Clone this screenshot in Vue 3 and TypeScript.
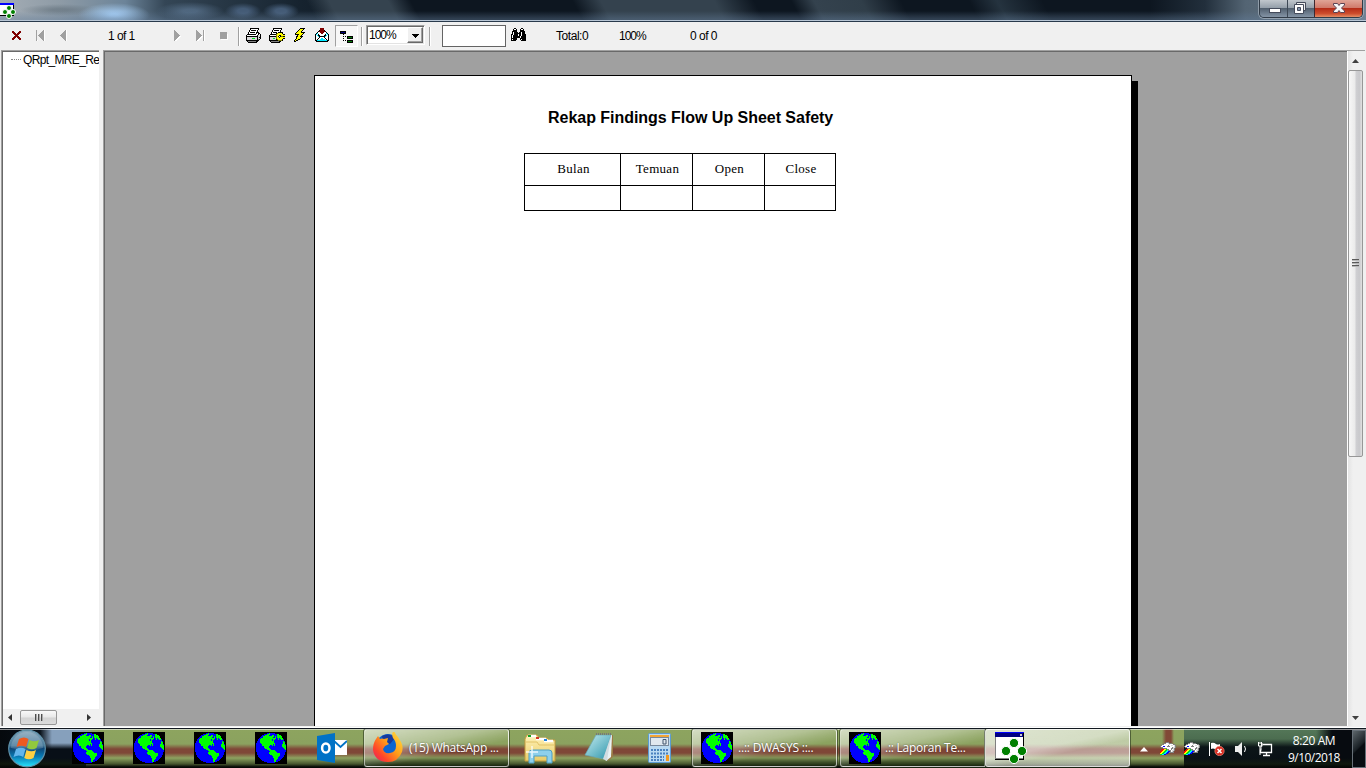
<script setup lang="ts">
interface Run { x: number; y: number; w: number; c: string }

const palette: Record<string, string> = {
  k: '#000', w: '#fff', g: '#a0a0a0', d: '#808080', l: '#d8d8d8', G: '#00e020', y: '#ffff00',
  o: '#808000', r: '#800000', c: '#00e8ff', b: '#000080', e: '#008000', R: '#ff0000', B: '#0000ff',
}

function sprite(rows: string[]): Run[] {
  const out: Run[] = []
  rows.forEach((row, y) => {
    let x = 0
    while (x < row.length) {
      const ch = row[x]
      let end = x + 1
      while (end < row.length && row[end] === ch) end++
      if (palette[ch]) out.push({ x, y, w: end - x, c: palette[ch] })
      x = end
    }
  })
  return out
}

const icons: Record<string, Run[]> = {
  close: sprite([
    'rr.....rr', 'rrr...rrr', '.rrr.rrr.', '..rrrrr..', '...rrr...', '..rrrrr..', '.rrr.rrr.', 'rrr...rrr', 'rr.....rr',
  ]),
  first: sprite([
    'g......gw', 'g.....ggw', 'g....gggw', 'g...ggggw', 'g..gggggw', 'g.ggggggw', 'g..gggggw', 'g...ggggw', 'g....gggw', 'g.....ggw', 'gw.....gw',
  ]),
  prev: sprite([
    '.....gw', '....ggw', '...gggw', '..ggggw', '.gggggw', 'ggggggw', '.gggggw', '..ggggw', '...gggw', '....ggw', '.....gw',
  ]),
  next: sprite([
    'g......', 'gg.....', 'ggg....', 'gggg...', 'ggggg..', 'gggggg.', 'gggggww', 'ggggww.', 'gggww..', 'ggww...', 'gww....',
  ]),
  last: sprite([
    'g......gw', 'gg.....gw', 'ggg....gw', 'gggg...gw', 'ggggg..gw', 'gggggg.gw', 'gggggwwgw', 'ggggww.gw', 'gggww..gw', 'ggww...gw', 'gww....gw',
  ]),
  stop: sprite(['ggggggg', 'ggggggg', 'gggggggw', 'gggggggw', 'gggggggw', 'gggggggw', 'gggggggw', '.wwwwwww']),
  print: sprite([
    '....kkkkkkkkk..',
    '....kwwwwwwwk..',
    '...kwkkkkkwk...',
    '...kwwwwwwwk...',
    '..kwkkkkkwkkk..',
    '..kwwwwwwwkwkk.',
    '.kkkkkkkkkwwkwk',
    'kwwwwwwwwwwkllk',
    'kkkkkkkkkkkkllk',
    'kllllllllllklkk',
    'klllllGGGllkllk',
    'kllllllllllkdk.',
    'kkkkkkkkkkkkk..',
    '.kddddddddkk...',
    '..kkkkkkkkk....',
  ]),
  setup: sprite([
    '....kkkkkkkkk...',
    '....kwwwwwwwk...',
    '...kwkkkkkwk....',
    '...kwwwwwwwk....',
    '..kwkkkkwkkkkk..',
    '..kwwwwkoyyyyk..',
    '.kkkkkkoyyyyyykk',
    'kwwwwwwoyykkyyyy',
    'kkkkkkkoykwkookk',
    'klllllloyykyyyyy',
    'klllGGloyyyyyykk',
    'kllllllkoyyyyk..',
    'kkkkkkkkkooook..',
    '.kddddddddkk....',
    '..kkkkkkkkk.....',
  ]),
  bolt: sprite([
    '......kkkkk.',
    '.....kyyyk..',
    '....kyyyk...',
    '...kyyyk....',
    '..kyyyykkkk.',
    '.kyyyyyyyk..',
    '.kkkkyyyk...',
    '...kyyyk....',
    '..kkyykkk...',
    '..kyyyyk....',
    '..kyyyk.....',
    '.kyykk......',
    'kykk........',
    'kk..........',
  ]),
  mail: sprite([
    '.....rrrr.....',
    '.....rrrr.....',
    '....krrrrk....',
    '...krrrrrrk...',
    '..kwwrrrrwwk..',
    '.kcwwwrrwwwck.',
    'kcwkwwwwwwkwck',
    'kwckkwwwwkkcwk',
    'kwwckkkkkkcwwk',
    'kwwwkwwwwkwwwk',
    'kwwkwwccwwkwwk',
    'kwkwwcccccwkwk',
    'kkcccccccccckk',
    '.kkkkkkkkkkkk.',
  ]),
  tree: sprite([
    'kkkkkk.......', 'kbbbbk.......', 'kkkkkk.......', '...k.........', '.............', '...k.k.kkkkkk', '.......keeeek', '...k...kkkkkk',
    '.............', '...k.k.kkkkkk', '.......keeeek', '.......kkkkkk',
  ]),
  find: sprite([
    '...kk.....kk...',
    '..kwwk...kwwk..',
    '..kkkk...kkkk..',
    '.kkkkk...kkkkk.',
    '.kwkkkk.kkwkkk.',
    '.kwkkkkkkkwkkk.',
    'kkwkkkkwkkwkkkk',
    'kwkkkkkwkkwkkkk',
    'kwkkkkkkkwkkkkk',
    'kwkkkkkkkwkkkkk',
    'kkkkkk...kkkkkk',
    'kwkkkk...kwkkkk',
    'kkkkk.....kkkkk',
  ]),
  tray: sprite([
    '......ddd.......',
    '....ddwwlddd....',
    '..ddwwwwwlwwwdd.',
    '.dwwwwwwdwwllwld',
    'dwwBBwwdddwwwwld',
    '.ddwwwwwwwwwdlld',
    '...ddddwwwwddld.',
    '..RRyyGddwwdwld.',
    '.RRyyGGcdddwlld.',
    'RRyyGGccBBdwld..',
    'RyyGGccBBddddd..',
    'yyGGccBB........',
    'GGccBB..........',
  ]),
}

interface Tool { id: string; cls: string; w: number; h: number }
const nav: Tool[] = [
  { id: 'close', cls: 't-close', w: 9, h: 9 },
  { id: 'first', cls: 't-first', w: 9, h: 11 },
  { id: 'prev', cls: 't-prev', w: 7, h: 11 },
]
const nav2: Tool[] = [
  { id: 'next', cls: 't-next', w: 7, h: 11 },
  { id: 'last', cls: 't-last', w: 9, h: 11 },
  { id: 'stop', cls: 't-stop', w: 8, h: 8 },
]
const actions: Tool[] = [
  { id: 'print', cls: 't-print', w: 15, h: 15 },
  { id: 'setup', cls: 't-setup', w: 16, h: 15 },
  { id: 'bolt', cls: 't-bolt', w: 12, h: 14 },
  { id: 'mail', cls: 't-mail', w: 14, h: 14 },
]
const headings = ['Bulan', 'Temuan', 'Open', 'Close']
</script>

<template>
  <div class="screen">
    <svg class="defs" width="0" height="0">
      <defs>
        <symbol id="globe" viewBox="0 0 32 32">
          <g shape-rendering="crispEdges">
            <rect width="32" height="32" fill="#000" />
            <circle cx="16" cy="16" r="15.2" fill="#00f" />
            <path fill="#0f0" d="M8 4H10V3H12V2H14V1H15V3H14V4H17V3H19V5H18V6H20V4H21V7H20V8H19V11H20V14H19V12H18V14H17V13H15V14H14V16H15V17H16V19H14V18H12V17H10V16H9V14H7V12H6V11H5V7H6V6H8Z" />
            <path fill="#0f0" d="M22 2H24V3H26V4H27V6H28V8H26V7H25V6H24V8H23V6H22ZM28 9H29V10H30V13H31V18H30V17H29V16H28V15H27V12H28ZM15 19H16V18H20V19H21V20H22V21H25V24H24V25H23V27H22V28H21V30H19V26H18V24H17V23H15V22H14V20H15Z" />
            <path fill="#00f" d="M16 1H18V3H16ZM17 7H18V9H17Z" />
          </g>
        </symbol>
        <linearGradient id="orb" x1="0" y1="0" x2="0" y2="1">
          <stop offset="0" stop-color="#8aa9bc" /><stop offset=".42" stop-color="#47799a" />
          <stop offset=".5" stop-color="#0e4777" /><stop offset=".72" stop-color="#087bb5" /><stop offset="1" stop-color="#29e5fc" />
        </linearGradient>
        <linearGradient id="fox" x1="1" y1="0" x2="0" y2="1">
          <stop offset="0" stop-color="#ffe84a" /><stop offset=".45" stop-color="#ff9f19" /><stop offset=".75" stop-color="#ff452a" /><stop offset="1" stop-color="#e6166f" />
        </linearGradient>
        <linearGradient id="folder" x1="0" y1="0" x2="0" y2="1">
          <stop offset="0" stop-color="#fff2b8" /><stop offset="1" stop-color="#e9cc68" />
        </linearGradient>
        <linearGradient id="pad" x1="0" y1="0" x2="1" y2="1">
          <stop offset="0" stop-color="#c6edf0" /><stop offset="1" stop-color="#2c94ab" />
        </linearGradient>
      </defs>
    </svg>

    <header class="titlebar">
      <svg class="app-icon" width="16" height="19" viewBox="0 0 16 19">
        <path fill="#000" d="M0 3h14v13H0z" /><path fill="#fff" d="M0 4h13v11H0z" />
        <path fill="#00f" d="M0 3h14v2H0z" />
        <g fill="#008000" stroke="#fff"><circle cx="9" cy="8" r="2.500" /><circle cx="5" cy="12" r="2.500" /><circle cx="13" cy="12" r="2.500" /><circle cx="9" cy="16" r="2.500" /></g>
      </svg>
      <div class="caption-buttons">
        <span class="cap min">
          <svg width="28" height="17"><rect x="9.5" y="8.5" width="11" height="4" fill="#fff" stroke="#444b5b" /></svg>
        </span>
        <span class="cap max">
          <svg width="26" height="17"><path d="M8.500 2.500h9v8h-9z" fill="#eee" stroke="#444b5b" /><path d="M6.500 4.500h9v9h-9z" fill="#fff" stroke="#444b5b" /><path d="M9.500 7.500h3v3h-3z" fill="#8494ad" stroke="#444b5b" /></svg>
        </span>
        <span class="cap shut">
          <svg width="46" height="17"><path d="M18.500 3.500h4l1.500 2 1.500-2h4v1.500L26.500 8l3 3v1.500h-4l-1.500-2-1.500 2h-4V11l3-3-3-3z" fill="#f7f7f7" stroke="#5b4353" /></svg>
        </span>
      </div>
    </header>

    <div class="toolbar">
      <svg v-for="t in nav" :key="t.id" :class="t.cls" :width="t.w" :height="t.h" shape-rendering="crispEdges">
        <rect v-for="(p, i) in icons[t.id]" :key="i" :x="p.x" :y="p.y" :width="p.w" height="1" :fill="p.c" />
      </svg>
      <span class="label pages">1 of 1</span>
      <svg v-for="t in nav2" :key="t.id" :class="t.cls" :width="t.w" :height="t.h" shape-rendering="crispEdges">
        <rect v-for="(p, i) in icons[t.id]" :key="i" :x="p.x" :y="p.y" :width="p.w" height="1" :fill="p.c" />
      </svg>
      <i class="sep s1"></i>
      <svg v-for="t in actions" :key="t.id" :class="t.cls" :width="t.w" :height="t.h" shape-rendering="crispEdges">
        <rect v-for="(p, i) in icons[t.id]" :key="i" :x="p.x" :y="p.y" :width="p.w" height="1" :fill="p.c" />
      </svg>
      <span class="tree-toggle">
        <svg width="13" height="12" shape-rendering="crispEdges">
          <rect v-for="(p, i) in icons.tree" :key="i" :x="p.x" :y="p.y" :width="p.w" height="1" :fill="p.c" />
        </svg>
      </span>
      <i class="sep s2"></i>
      <div class="combo">
        <span class="label">100%</span>
        <span class="drop"><svg width="7" height="4" shape-rendering="crispEdges"><path d="M0 0h7v1H6v1H5v1H4v1H3V3H2V2H1V1H0z" /></svg></span>
      </div>
      <i class="sep s3"></i>
      <div class="search"></div>
      <svg class="t-find" width="15" height="13" shape-rendering="crispEdges">
        <rect v-for="(p, i) in icons.find" :key="i" :x="p.x" :y="p.y" :width="p.w" height="1" :fill="p.c" />
      </svg>
      <span class="label total">Total:0</span>
      <span class="label percent">100%</span>
      <span class="label found">0 of 0</span>
    </div>

    <main class="work">
      <aside class="tree">
        <div class="node"><i class="dots"></i><span class="label">QRpt_MRE_Re</span></div>
        <div class="hscroll">
          <svg width="4" height="7"><path d="M4 0v7L0 3.500z" fill="#333" /></svg>
          <span class="hthumb"><i></i><i></i><i></i></span>
          <svg class="to-right" width="4" height="7"><path d="M0 0v7l4-3.500z" fill="#333" /></svg>
        </div>
      </aside>
      <section class="viewer">
        <div class="canvas">
          <article class="page">
            <h1>Rekap Findings Flow Up Sheet Safety</h1>
            <table>
              <tbody>
                <tr class="head"><td v-for="h in headings" :key="h"><span>{{ h }}</span></td></tr>
                <tr class="empty"><td v-for="h in headings" :key="h"></td></tr>
              </tbody>
            </table>
          </article>
        </div>
        <div class="vscroll">
          <svg class="arrow-up" width="7" height="4"><path d="M0 4h7L3.500 0z" fill="#404040" /></svg>
          <span class="vthumb"><i></i><i></i><i></i></span>
          <svg class="arrow-down" width="7" height="4"><path d="M0 0h7L3.500 4z" fill="#404040" /></svg>
        </div>
      </section>
    </main>

    <footer class="taskbar">
      <svg class="start" width="40" height="40" viewBox="0 0 40 40">
        <circle cx="20" cy="19.500" r="18.300" fill="url(#orb)" stroke="#5f91a9" stroke-width="1.200" />
        <path d="M4 19a16 16 0 0 1 32 0q-16 5-32 0z" fill="#fff" opacity=".15" />
        <path d="M12 10q5-3 9.500 0l-2.500 8q-4-2.500-9.500 0z" fill="#ee5a20" />
        <path d="M22.500 11q5 2.500 9.500 0l-2.500 8q-4.500 2.500-9.500 0z" fill="#91c83e" />
        <path d="M9 20q5-2.500 9.500 0l-2.300 8q-4-3-9.700 0z" fill="#62b5ec" />
        <path d="M19.500 21q5 2.500 9.500 0l-2.500 8q-4.500 2.500-9.300 0z" fill="#ffd043" />
      </svg>
      <svg v-for="n in 4" :key="n" class="globe pin" width="32" height="32"><use href="#globe" /></svg>
      <svg class="outlook" width="30" height="30" viewBox="0 0 30 30">
        <path d="M15 7h15v15H15z" fill="#fff" /><path d="M17 8l6.500 6L30 8" fill="none" stroke="#0072c6" stroke-width="1.800" />
        <path d="M0 3L18 0v30L0 27z" fill="#0072c6" /><ellipse cx="8.800" cy="15" rx="3.700" ry="4.600" fill="none" stroke="#fff" stroke-width="2.500" />
      </svg>
      <div class="task firefox">
        <svg width="30" height="31" viewBox="0 0 30 31">
          <circle cx="15" cy="14" r="12" fill="#0b65d1" /><path d="M9 4q7-4 13 2l-5 6-7-2z" fill="#173b9d" />
          <path d="M3 7l2-3 2 3q2-1 4 0l4-1-1 4 2 2-4 2-2 3q1 5 7 4 6-1 6-7 0-5-3-8-2-4 1-8 1 4 4 7l1 2q5 6 3 13-4 10-14 10Q2 30 0 18 0 11 3 7z" fill="url(#fox)" />
        </svg>
        <span class="cap-text t1">(15) WhatsApp ...</span>
      </div>
      <svg class="explorer" width="33" height="30" viewBox="0 0 33 30">
        <path d="M3 1h10l2 3h8l2 2h6v21H1V5z" fill="url(#folder)" stroke="#c49b3c" />
        <path d="M4 2h8M12 5h10M20 7h9" stroke="#fff" stroke-width="2.500" /><path d="M4 2h3" stroke="#15a525" stroke-width="2" /><path d="M12 4h3" stroke="#d43924" stroke-width="2" /><path d="M20 6h3" stroke="#2284df" stroke-width="2" />
        <path d="M2 8h11l2 3h16" stroke="#e1c367" fill="none" />
        <path d="M5 29V19q0-3 3-3h17q3 0 3 3v10h-5v-7H10v7z" fill="#8ed0ec" stroke="#4f9fc3" />
        <path d="M8 12v12M2 18h12" stroke="#fff" stroke-width="1.500" opacity=".8" />
      </svg>
      <svg class="notepad" width="31" height="30" viewBox="0 0 31 30">
        <path d="M12 2h17v22l-5 4z" fill="#9b7b45" /><path d="M12 2h16l-1 22-5 4z" fill="#eaf2f5" />
        <path d="M12 2h15L20 26 1 22z" fill="url(#pad)" stroke="#69a9b5" stroke-width=".7" /><path d="M27 3l-4 25-4-2z" fill="#d2dce1" /><path d="M12 1h16" stroke="#777" stroke-width="2" stroke-dasharray="1 1" />
      </svg>
      <svg class="calculator" width="23" height="30" viewBox="0 0 23 30">
        <rect x=".5" y=".5" width="22" height="29" rx="1" fill="#b9daf2" stroke="#5b9bd1" /><rect x="2" y="2" width="19" height="2.500" fill="#f3a536" />
        <rect x="2.500" y="4.500" width="18" height="8" fill="#e0e8ee" stroke="#78899c" /><path d="M15 6.500h3v4.500h-3z" fill="none" stroke="#42576f" />
        <path d="M3 17h17M3 20.500h17M3 24h13M3 27h13" stroke="#4b82c0" stroke-width="2" stroke-dasharray="2 1" /><rect x="18" y="22" width="3" height="6" fill="#f39a21" />
      </svg>
      <div class="task dwasys"><svg class="globe" width="32" height="32"><use href="#globe" /></svg><span class="cap-text t2">..:: DWASYS ::..</span></div>
      <div class="task laporan"><svg class="globe" width="32" height="32"><use href="#globe" /></svg><span class="cap-text t3">.:: Laporan Te...</span></div>
      <div class="task active">
        <svg width="32" height="32" viewBox="0 0 32 32">
          <path d="M0 0h29v28H0z" fill="#000" /><path d="M0 0h28v27H0z" fill="#808080" /><path d="M1 4h27v22H1z" fill="#fff" /><path d="M0 0h29v1H0z" fill="#00f" /><path d="M0 1h28v4H0z" fill="#000080" /><path d="M25 2h2v2h-2z" fill="#ccc" />
          <g fill="#008000" stroke="#fff"><circle cx="19" cy="11" r="4.600" /><circle cx="11" cy="19" r="4.600" /><circle cx="27" cy="19" r="4.600" /><circle cx="19" cy="27" r="4.600" /></g>
        </svg>
      </div>
      <svg class="chevron" width="8" height="5"><path d="M0 4.500h8L4 0z" fill="#fff" /></svg>
      <svg v-for="n in 2" :key="'p' + n" class="tray-printer" width="17" height="14" shape-rendering="crispEdges">
        <rect v-for="(p, i) in icons.tray" :key="i" :x="p.x" :y="p.y" :width="p.w" height="1" :fill="p.c" />
      </svg>
      <svg class="flag" width="16" height="14" viewBox="0 0 16 14">
        <path d="M.5 0v14" stroke="#fff" /><path d="M2 1q3-1 5 1 2 1 4 0v6q-3 1-5-1-2-1-4 0z" fill="#fff" />
        <circle cx="10.500" cy="9" r="4.700" fill="#d92c21" stroke="#f29787" stroke-width=".6" /><path d="M8.500 7l4 4m0-4l-4 4" stroke="#fff" stroke-width="1.500" />
      </svg>
      <svg class="speaker" width="12" height="14" viewBox="0 0 12 14"><path d="M0 4h3l4-4v14l-4-4H0z" fill="#eee" /><path d="M9.500 4q2 3 0 6" fill="none" stroke="#fff" /></svg>
      <svg class="network" width="16" height="15" viewBox="0 0 16 15">
        <path d="M5.500 2.500h9v8h-11v-3M6 13.500h7M9.500 11v2" fill="none" stroke="#fff" stroke-width="1.300" /><path d="M1 1h4v3L4 5.500v3M1.500 0v4h3V0M3 4v9" fill="none" stroke="#fff" />
      </svg>
      <div class="clock"><span>8:20 AM</span><span class="date">9/10/2018</span></div>
      <div class="peek"></div>
    </footer>
  </div>
</template>

<style>
html, body { margin: 0; overflow: hidden; background: #f0f0f0; }
</style>

<style scoped>
* { box-sizing: border-box; }
svg { display: block; flex: none; }
.defs { position: absolute; }
.screen { width: 1366px; height: 768px; display: flex; flex-direction: column; overflow: hidden; font-family: "Liberation Sans", sans-serif; font-size: 11px; color: #000; }

.titlebar {
  height: 22px; flex: none; display: flex; justify-content: space-between; align-items: flex-start; padding-right: 3px;
  border-bottom: 1px solid #293a4c; box-shadow: inset 0 -1px #b8c6d5;
  background:
    linear-gradient(180deg, transparent 11px, #657f9c66 19px),
    radial-gradient(ellipse 36px 12px at 114px 15px, #a6cef5 10%, transparent 100%),
    radial-gradient(ellipse 34px 9px at 190px 11px, #57708acc 20%, transparent 100%),
    radial-gradient(ellipse 18px 8px at 243px 11px, #445b76 30%, transparent 100%),
    radial-gradient(ellipse 18px 8px at 281px 11px, #445b76 30%, transparent 100%),
    radial-gradient(ellipse 40px 6px at 60px 10px, #62707b99 20%, transparent 100%),
    linear-gradient(62deg, transparent 280px, #35434f 300px, #35434f 352px, transparent 372px, transparent 515px, #34424e 540px, #34424e 640px, transparent 675px, transparent 708px, #34424e 728px, #303e49 770px, transparent 805px, transparent 865px, #25333f 890px, transparent 930px),
    linear-gradient(90deg, #a4adb5 0, #8e9ba6 60px, #6c8499 125px, #344656 165px, #16232f 300px, #0d1620 400px, #0d1620 1150px, #222f3c 1205px, #536473 1245px, #748392 1366px);
}
.caption-buttons { display: flex; height: 18px; border: 1px solid #303b47; border-top: 0; border-radius: 0 0 5px 5px; overflow: hidden; box-shadow: 0 0 0 1px #b6c0ca99; }
.cap { display: block; height: 17px; }
.min { width: 28px; border-right: 1px solid #3d4855; }
.max { width: 27px; border-right: 1px solid #3d2830; }
.shut { width: 47px; }
.min, .max { background: linear-gradient(#c1c7cd, #929da8 48%, #52606f 50%, #8494a6); }
.shut { background: linear-gradient(#e0a497, #cf7768 48%, #b52c18 50%, #cd4d2d 80%, #e48d65); }

.toolbar { height: 28px; flex: none; display: flex; align-items: flex-start; background: #f0f0f0; }
.label { white-space: nowrap; font-size: 12px; line-height: 14px; }
.t-close { margin: 9px 0 0 12px; }
.t-first { margin: 8px 0 0 15px; }
.t-prev { margin: 8px 0 0 15px; }
.pages { width: 66px; margin: 7px 0 0 41px; letter-spacing: -.55px; }
.t-next { margin-top: 8px; }
.t-last { margin: 8px 0 0 15px; }
.t-stop { margin: 10px 0 0 15px; }
.sep { width: 2px; height: 19px; margin-top: 5px; background: linear-gradient(90deg, #a0a0a0 50%, #fff 50%); flex: none; }
.s1 { margin-left: 10px; }
.t-print { margin: 6px 0 0 6px; }
.t-setup { margin: 6px 0 0 8px; }
.t-bolt { margin: 6px 0 0 9px; }
.t-mail { margin: 6px 0 0 9px; }
.tree-toggle { width: 23px; height: 22px; margin: 3px 0 0 6px; padding: 5px 0 0 4px; border: 1px solid; border-color: #a0a0a0 #fff #fff #a0a0a0; background: #f7f7f7; flex: none; }
.s2 { margin-left: 3px; }
.combo { width: 59px; height: 20px; margin: 3px 0 0 3px; flex: none; display: flex; justify-content: space-between; background: #fff; border: 1px solid; border-color: #a0a0a0 #fff #fff #a0a0a0; box-shadow: inset 1px 1px #696969, inset -1px -1px #e3e3e3; padding: 1px; }
.combo .label { margin: 1px 0 0 1px; letter-spacing: -1px; }
.drop { width: 16px; height: 16px; background: #f0f0f0; border: 1px solid; border-color: #fff #696969 #696969 #fff; box-shadow: inset -1px -1px #a0a0a0; padding: 6px 0 0 4px; }
.s3 { margin-left: 4px; }
.search { width: 64px; height: 22px; margin: 3px 0 0 11px; background: #fff; border: 1px solid #646464; flex: none; }
.t-find { margin: 6px 0 0 5px; }
.total { width: 63px; margin: 7px 0 0 30px; letter-spacing: -.45px; }
.percent { width: 71px; margin-top: 7px; letter-spacing: -1px; }
.found { margin-top: 7px; letter-spacing: -.5px; }

.work { height: 678px; flex: none; display: flex; background: #f0f0f0; border-bottom: 1px solid #fff; }
.tree { width: 98px; height: 676px; margin-left: 1px; border: 1px solid #a0a0a0; border-width: 1px 0 0 1px; box-shadow: inset 1px 1px #696969; background: #fff; display: flex; flex-direction: column; justify-content: space-between; overflow: hidden; }
.node { display: flex; align-items: center; margin: 1px 0 0 9px; height: 15px; }
.dots { width: 10px; border-top: 1px dotted #888; flex: none; }
.node .label { margin-left: 2px; letter-spacing: -.64px; }
.hscroll { height: 17px; margin-left: 1px; background: #f0f0f0; display: flex; align-items: center; padding: 0 0 1px 5px; }
.hthumb { width: 37px; height: 15px; margin-left: 8px; border: 1px solid #979797; border-radius: 2px; background: linear-gradient(#f8f8f8, #e8e8e8 48%, #d3d3d3 52%, #dcdcdc); display: flex; justify-content: center; align-items: center; gap: 1px; }
.hthumb i { width: 2px; height: 7px; background: #4d4d4d; border-right: 1px solid #aaa; }
.to-right { margin-left: 30px; }

.viewer { width: 1262px; height: 676px; margin-left: 4px; border: 1px solid #a0a0a0; border-width: 1px 0 0 1px; display: flex; }
.canvas { width: 1243px; height: 675px; border: 1px solid #696969; border-width: 1px 0 0 1px; background: #a0a0a0; padding: 23px 0 0 209px; overflow: hidden; }
.page { width: 818px; height: 1000px; border: 1px solid #000; background: #fff; box-shadow: 6px 6px #000; padding-top: 32px; }
h1 { margin: 0 0 0 233px; font-size: 16px; line-height: 20px; height: 20px; white-space: nowrap; letter-spacing: -.03px; }
table { margin: 25px 0 0 209px; width: 312px; border-collapse: collapse; table-layout: fixed; font: 13px/15px "Liberation Serif", serif; }
td { border: 1px solid #000; padding: 0 0 2px 2px; text-align: center; width: 72px; }
td:first-child { width: 96px; }
td:last-child { width: 71px; }
.head td { height: 32px; }
.empty td { height: 25px; }
td span { letter-spacing: .3px; }
.vscroll { width: 18px; height: 675px; border-left: 1px solid #fff; background: linear-gradient(90deg, #e3e3e3, #f0f0f0 5px, #f0f0f0); display: flex; flex-direction: column; align-items: center; padding: 8px 2px 0 0; }
.vthumb { width: 15px; height: 387px; margin-top: 7px; border: 1px solid #979797; border-radius: 2px; background: linear-gradient(90deg, #f7f7f7, #eaeaea 48%, #d0d0d3 52%, #c9c9cc 80%, #e1e1e1); display: flex; flex-direction: column; align-items: center; justify-content: center; gap: 1px; padding-bottom: 1px; }
.vthumb i { width: 7px; height: 2px; background: #5a5a5a; border-bottom: 1px solid #b8b8b8; }
.arrow-down { margin-top: 259px; }

.taskbar {
  height: 40px; flex: none; display: flex; align-items: flex-start; border-top: 1px solid #111820; box-shadow: inset 0 1px #ffffff90; overflow: hidden; font-family: "Open Sans", sans-serif;
  background:
    linear-gradient(180deg, transparent 29px, #15210c99 35px, #050805 38px),
    linear-gradient(90deg, #05090d 0, #081018 40px, transparent 52px, transparent 1316px, #070b10 1332px),
    linear-gradient(180deg, transparent 14px, #080f17 20px) 0 0 / 86px 40px no-repeat,
    linear-gradient(90deg, #86a0bc 0 80px, transparent 94px),
    linear-gradient(180deg, #547758 0, #4c6d50 10px, #0c1518 18px, #080e14 40px) 1184px 0 / 182px 40px no-repeat,
    linear-gradient(90deg, transparent 1162px, #814936 1166px, #814936 1171px, transparent 1174px) 0 0 / 1184px 22px no-repeat,
    linear-gradient(180deg, #8da45f 0, #8ba25f 15px, #7f4737 20px, #7f4737 24px, #8da260 29px);
}
.start { margin-left: 7px; }
.globe { margin-top: 3px; }
.pin { margin-left: 29px; }
.start + .pin { margin-left: 25px; }
.outlook { margin: 4px 0 0 30px; }
.task { height: 38px; display: flex; border: 1px solid #ffffff99; border-radius: 3px; flex: none; background: linear-gradient(168deg, #ffffffa0 0, #ffffff55 38%, #ffffff28 50%, transparent 62%), linear-gradient(transparent 72%, #1b2b10aa); box-shadow: 0 0 0 1px #27341a99; }
.firefox { width: 145px; margin-left: 17px; padding: 2px 0 0 8px; }
.cap-text { color: #fff; font-size: 12px; line-height: 18px; margin-top: 9px; white-space: nowrap; text-shadow: 0 0 2px #0008; }
.t1 { margin: 7px 0 0 6px; letter-spacing: -.25px; }
.explorer { margin: 5px 0 0 15px; }
.notepad { margin: 4px 0 0 27px; }
.calculator { margin: 4px 0 0 33px; }
.dwasys { width: 145px; margin-left: 21px; padding-left: 8px; }
.dwasys .globe, .laporan .globe { margin-top: 2px; }
.t2 { margin-left: 5px; letter-spacing: -.2px; }
.laporan { width: 145px; margin-left: 3px; padding-left: 8px; border-radius: 3px 0 0 3px; }
.t3 { margin-left: 4px; letter-spacing: -.25px; }
.active { width: 145px; padding: 2px 0 0 9px; background: linear-gradient(168deg, #ffffffb0 0, #ffffff98 45%, #ffffff60 60%, #ffffff70), linear-gradient(#ffffff11, #ffffff33); }
.chevron { margin: 18px 0 0 10px; }
.tray-printer { margin: 13px 0 0 12px; }
.tray-printer + .tray-printer { margin-left: 7px; }
.flag { margin: 13px 0 0 8px; }
.speaker { margin: 13px 0 0 10px; }
.network { margin: 13px 0 0 10px; }
.clock { width: 70px; margin: 3px 0 0 6px; color: #fff; font-size: 12px; line-height: 17px; text-align: center; display: flex; flex-direction: column; letter-spacing: -.4px; }
.date { letter-spacing: -.55px; }
.peek { width: 14px; height: 38px; margin: 1px 0 0 auto; border: 1px solid #677078; background: linear-gradient(135deg, #5d666b, #192025 45%, #080c11 50%); }
</style>
